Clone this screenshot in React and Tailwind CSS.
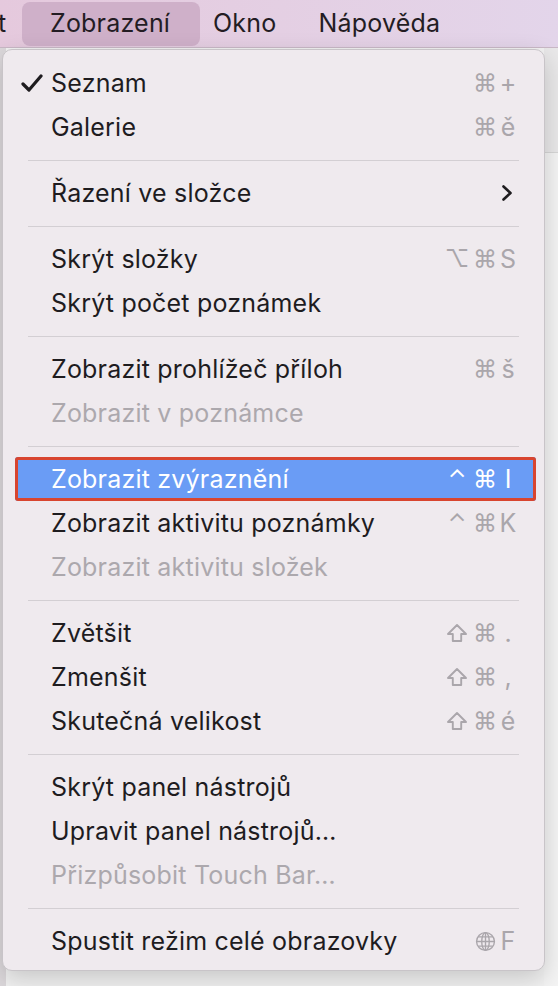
import React from "react";

const font = { fontFamily: "Inter, 'Noto Sans', 'DejaVu Sans', sans-serif" };

const Check = () => (
  <svg width="22" height="19" viewBox="0 0 22 19" className="text-[#1e1c1f]">
    <path d="M2 10 L8 16 L20 2" fill="none" stroke="currentColor" strokeWidth="3.2" strokeLinecap="round" strokeLinejoin="round" />
  </svg>
);

const Chevron = () => (
  <svg width="12" height="18" viewBox="0 0 12 18">
    <path d="M2.5 2.5 L9.5 9 L2.5 15.5" fill="none" stroke="#1e1c1f" strokeWidth="2.6" strokeLinecap="round" strokeLinejoin="round" />
  </svg>
);

const Shift = ({ color }) => (
  <svg width="22" height="20" viewBox="0 0 22 20">
    <path d="M11 2 L20 11 L15.2 11 L15.2 18 L6.8 18 L6.8 11 L2 11 Z" fill="none" stroke={color} strokeWidth="1.9" strokeLinejoin="round" />
  </svg>
);

const Globe = ({ color }) => (
  <svg width="21" height="21" viewBox="0 0 20 20" fill="none" stroke={color} strokeWidth="1.3">
    <circle cx="10" cy="10" r="8.5" />
    <ellipse cx="10" cy="10" rx="3.6" ry="8.5" />
    <path d="M10 1.5 V18.5 M1.5 10 H18.5 M3 5.6 H17 M3 14.4 H17" />
  </svg>
);

const sections = [
  [
    { label: "Seznam", checked: true, mods: ["⌘"], key: "+" },
    { label: "Galerie", mods: ["⌘"], key: "ě" },
  ],
  [{ label: "Řazení ve složce", submenu: true }],
  [
    { label: "Skrýt složky", mods: ["⌥", "⌘"], key: "S" },
    { label: "Skrýt počet poznámek" },
  ],
  [
    { label: "Zobrazit prohlížeč příloh", mods: ["⌘"], key: "š" },
    { label: "Zobrazit v poznámce", disabled: true },
  ],
  [
    { label: "Zobrazit zvýraznění", active: true, mods: ["⌃", "⌘"], key: "I" },
    { label: "Zobrazit aktivitu poznámky", mods: ["⌃", "⌘"], key: "K" },
    { label: "Zobrazit aktivitu složek", disabled: true },
  ],
  [
    { label: "Zvětšit", mods: ["shift", "⌘"], key: "." },
    { label: "Zmenšit", mods: ["shift", "⌘"], key: "," },
    { label: "Skutečná velikost", mods: ["shift", "⌘"], key: "é" },
  ],
  [
    { label: "Skrýt panel nástrojů" },
    { label: "Upravit panel nástrojů…" },
    { label: "Přizpůsobit Touch Bar…", disabled: true },
  ],
  [{ label: "Spustit režim celé obrazovky", mods: ["globe"], key: "F" }],
];

function Mod({ m, color }) {
  if (m === "shift") return <span className="w-[28px] flex justify-center"><Shift color={color} /></span>;
  if (m === "globe") return <span className="w-[28px] flex justify-center"><Globe color={color} /></span>;
  return <span className="w-[28px] text-center text-[24px] leading-none">{m}</span>;
}

function Item({ item }) {
  const textColor = item.active ? "text-white" : item.disabled ? "text-[#aca8ad]" : "text-[#1e1c1f]";
  const scColor = item.active ? "#ffffff" : "#aaa6ab";
  return (
    <div
      className={`ml-[12px] mr-[8px] h-[44px] flex items-center pr-[19px] ${
        item.active ? "bg-[#6a9cf5] rounded-[3px] ring-3 ring-inset ring-[#d8452f]" : ""
      }`}
    >
      <div className="w-[36px] pl-[6px] flex items-center">{item.checked && <Check />}</div>
      <span className={`flex-1 text-[25px] leading-none tracking-[0.2px] ${textColor}`}>{item.label}</span>
      {item.submenu && <span className="pr-[4px] flex items-center"><Chevron /></span>}
      {item.mods && (
        <div className="flex items-center" style={{ color: scColor }}>
          {item.mods.map((m, i) => (
            <Mod key={i} m={m} color={scColor} />
          ))}
          <span className="w-[18px] text-center text-[25px] leading-none">{item.key}</span>
        </div>
      )}
    </div>
  );
}

export default function App() {
  return (
    <div className="w-[558px] h-[986px] relative overflow-hidden bg-[#f2f2f2]" style={font}>
      {/* menu bar */}
      <div className="h-[48px] flex items-center bg-gradient-to-r from-[#e5c9dd] via-[#e4cfe3] to-[#e3d5ea] text-[25px] tracking-[0.2px] text-[#231c23] border-b border-[#c9b8c6]">
        <span className="w-[20px] -ml-[2px]">t</span>
        <span className="ml-[4px] h-[44px] w-[178px] rounded-[8px] bg-[#cfb0c9] flex items-center pl-[28px]">Zobrazení</span>
        <span className="ml-[13px]">Okno</span>
        <span className="ml-[42px]">Nápověda</span>
      </div>

      {/* background content */}
      <div className="flex h-[938px]">
        <div className="w-[6px] bg-[#dcd8db]" />
        <div className="flex-1" />
        <div className="w-[14px] flex flex-col">
          <div className="h-[105px] bg-[#e9e8e9] border-b border-[#d6d6d6]" />
          <div className="flex-1 bg-[#f4f4f4]" />
        </div>
      </div>

      {/* dropdown menu */}
      <div className="absolute left-[2px] top-[49px] w-[543px] h-[922px] rounded-[10px] bg-[#efeaee] border border-[#c8c4c8] shadow-[0_8px_24px_rgba(0,0,0,0.18)] pt-[11px]">
        {sections.map((sec, si) => (
          <div key={si}>
            {si > 0 && (
              <div className="h-[22px] flex items-center px-[25px]">
                <div className="h-px w-full bg-[#d3cfd3]" />
              </div>
            )}
            {sec.map((item, ii) => (
              <Item key={ii} item={item} />
            ))}
          </div>
        ))}
      </div>
    </div>
  );
}
